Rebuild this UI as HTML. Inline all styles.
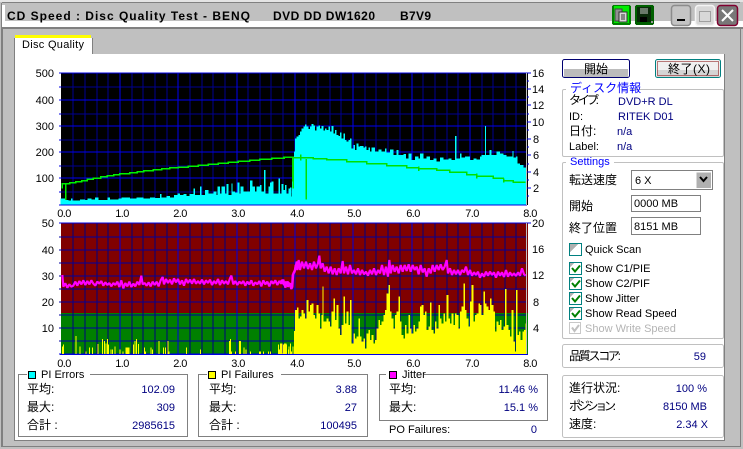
<!DOCTYPE html>
<html><head><meta charset="utf-8"><title>CD Speed</title>
<style>
html,body{margin:0;padding:0;background:#c0c0c0;width:743px;height:449px;overflow:hidden}
svg{display:block;position:absolute;left:0;top:0}
text{font-family:"Liberation Sans","Noto Sans CJK JP",sans-serif;font-size:11px;fill:#000}
.j{font-size:12px}
.n{fill:#000080}
.b{fill:#0000ff}
.e{text-anchor:end}
.m{text-anchor:middle;letter-spacing:-.6px}
.g{fill:#b4b4b4}
.c{shape-rendering:crispEdges}
</style></head><body>
<svg width="743" height="449" viewBox="0 0 743 449">
<!-- window frame -->
<g class="c">
<rect width="743" height="449" fill="#c0c0c0"/>
<rect x="0" y="0" width="743" height="2" fill="#e4e4e4"/>
<rect x="2" y="2" width="738" height="1" fill="#808080"/>
<rect x="1" y="3" width="1" height="444" fill="#808080"/>
<rect x="2" y="5" width="3" height="17" fill="#fff"/>
<rect x="2" y="21" width="741" height="6" fill="#fff"/>
<rect x="2" y="27" width="741" height="2" fill="#808080"/>
<rect x="2" y="29" width="1" height="418" fill="#808080"/>
<rect x="2" y="446" width="739" height="1" fill="#808080"/>
<rect x="740" y="29" width="1" height="418" fill="#808080"/>
<!-- page -->
<rect x="15" y="54" width="709" height="386" fill="#fff"/>
<rect x="14" y="54" width="1" height="387" fill="#808080"/>
<rect x="14" y="440" width="711" height="1" fill="#808080"/>
<rect x="724" y="54" width="1" height="387" fill="#808080"/>
<!-- tab -->
<rect x="15" y="38" width="77" height="17" fill="#fff"/>
<rect x="15" y="35" width="76" height="3" fill="#ffff00"/>
<rect x="14" y="38" width="1" height="17" fill="#808080"/>
<rect x="92" y="38" width="1" height="16" fill="#808080"/>
</g>
<text x="22" y="48" textLength="62">Disc Quality</text>
<!-- title -->
<g style="font-weight:bold">
<text x="7" y="20" textLength="243" style="font-size:12px;font-weight:bold">CD Speed : Disc Quality Test - BENQ</text>
<text x="273" y="20" textLength="102" style="font-size:12px;font-weight:bold">DVD DD DW1620</text>
<text x="400" y="20" textLength="31" style="font-size:12px;font-weight:bold">B7V9</text>
</g>
<!-- title icons -->
<g class="c">
<rect x="612" y="5" width="19" height="20" rx="2" fill="#008000"/>
<rect x="614" y="6" width="15" height="17" fill="#00ee00"/>
<rect x="615" y="9" width="7" height="12" fill="#909090" stroke="#444"/>
<rect x="619" y="12" width="8" height="10" fill="#d8d8d8" stroke="#333"/>
<path d="M621 15h4M621 17h4M621 19h4" stroke="#333"/>
<rect x="635" y="5" width="19" height="20" rx="2" fill="#006000"/>
<rect x="637" y="7" width="14" height="15" fill="#0a2a0a"/>
<rect x="640" y="8" width="8" height="6" fill="#6a7a6a"/>
<rect x="640" y="17" width="7" height="5" fill="#000"/>
<rect x="651" y="21" width="2" height="2" fill="#999"/>
</g>
<rect x="671.500" y="5.500" width="19" height="20" rx="3" fill="#c4c4c4" stroke="#8c8c8c" stroke-width="1.500"/>
<rect x="677" y="19" width="8" height="2" fill="#000" class="c"/>
<rect x="695.500" y="5.500" width="19" height="20" rx="3" fill="#d8d8d8" stroke="#f4f4f4" stroke-width="1.500"/>
<rect x="699.500" y="11.500" width="11" height="10" fill="none" stroke="#a0a0a0"/>
<rect x="717.500" y="5.500" width="20" height="20" rx="3" fill="#787878" stroke="#800030" stroke-width="1.500"/>
<path d="M722 10L733 21M733 10L722 21" stroke="#fff" stroke-width="2"/>

<!-- chart 1 -->
<g class="c">
<rect x="61" y="73" width="467" height="132" fill="#000"/>
<path d="M73 73V205M85 73V205M97 73V205M108 73V205M132 73V205M143 73V205M155 73V205M167 73V205M190 73V205M202 73V205M213 73V205M225 73V205M248 73V205M260 73V205M271 73V205M283 73V205M306 73V205M318 73V205M330 73V205M341 73V205M365 73V205M376 73V205M388 73V205M400 73V205M423 73V205M435 73V205M447 73V205M458 73V205M482 73V205M493 73V205M505 73V205M516 73V205M61 87H527M61 114H527M61 140H527M61 166H527M61 192H527" stroke="#000090" fill="none"/>
<path d="M120 73V205M178 73V205M237 73V205M295 73V205M353 73V205M412 73V205M470 73V205M59 100H527M59 126H527M59 152H527M59 178H527" stroke="#0000f0" fill="none"/>
<path d="M59 73H527M59 87H61M59 114H61M59 140H61M59 166H61M59 192H61M59 205H527" stroke="#0000e0" fill="none"/>
<path d="M527 73H531M527 81H529M527 89H531M527 97H529M527 105H531M527 114H529M527 122H531M527 130H529M527 139H531M527 147H529M527 155H531M527 164H529M527 172H531M527 180H529M527 188H531M527 196H529" stroke="#0000e0" fill="none"/>
<g transform="translate(30 60) scale(.33333)">
<path fill="#00ffff" d="M92 434V415H105V420H115V422H123V415H128V421H140V422H150V418H165V420H172V415H185V418H195V412H205V420H232V412H240V418H265V416H275V412H300V415H320V413H340V416H360V412H375V414H390V402H395V412H410V408H420V412H432V405H442V400H450V405H460V402H470V408H478V402H490V386H495V405H510V380H515V405H525V390H535V400H550V395H560V405H562V380H570V400H575V380H585V400H590V372H596V405H605V370H608V395H615V398H622V368H628V400H632V380H640V395H660V362H668V380H675V395H680V380H690V375H695V395H702V330H706V400H715V380H720V368H725V365H730V400H745V355H750V400H755V390H765V378H770V405H780V382H785V410H787V335H792V275H797V235H802V245H807V228H810V434Z"/>
</g>
<g transform="translate(280 60) scale(.33333)">
<path fill="#00ffff" d="M0 434V405H5V372H10V405H15V375H20V400H25V385H32V410H36V333H45V235H50V230H55V225H60V215H65V205H70V200H75V193H80V200H85V207H90V200H95V192H100V197H105V212H110V200H115V197H120V205H125V198H130V212H135V205H140V210H145V200H150V215H155V198H160V220H165V210H170V225H175V228H180V218H185V235H190V220H195V240H200V245H205V240H210V235H215V265H220V255H225V270H230V250H235V260H240V258H250V262H255V260H260V270H265V262H270V275H275V262H285V275H295V268H305V275H315V265H320V278H330V268H340V285H350V270H355V285H370V282H378V295H385V280H395V300H405V290H415V295H420V280H430V295H440V290H450V300H460V295H470V305H480V293H490V298H505V295H515V300H525V228H529V295H540V280H545V292H555V290H570V300H580V295H590V298H600V290H605V285H615V198H618V285H628V270H635V285H650V275H660V280H670V285H680V290H697V273H700V292H708V290H712V310H720V315H730V322H738V325H740V434Z"/>
</g>
<rect x="526" y="73" width="1" height="132" fill="#c0c0c0"/>
</g>
<g class="c" transform="translate(30 60) scale(.33333)" fill="none" stroke="#00f000" stroke-width="4.500">
<path d="M97 385V372H108V420M108 372H120V369H138V366H155V362H172V358H190V355H212V351H232V348H252V345H270V342H300V339H322V336H342V333H370V330H395V327H420V324H445V322H475V319H505V316H535V313H565V310H595V307H625V304H660V301H690V298H725V295H762V292H792M790 292V385"/>
</g>
<g class="c" transform="translate(280 60) scale(.33333)" fill="none" stroke="#00e000" stroke-width="4.500">
<path d="M0 295H13V292H40M39 292V365M40 293H62M62 283V302M62 294H100V297H140V300H200V306H260V312H320V318H380V323H417M417 320V333M417 326H470V331H510V337H560V344H590M591 340V355M591 349H640V355H672M672 356V368M672 362H700V367H736M79 297V418"/>
</g>
<g class="e">
<text x="54" y="77">500</text><text x="54" y="104">400</text><text x="54" y="130">300</text><text x="54" y="156">200</text><text x="54" y="182">100</text>
</g>
<text x="532" y="77">16</text><text x="532" y="93">14</text><text x="532" y="109">12</text><text x="532" y="126">10</text>
<text x="533" y="143">8</text><text x="533" y="159">6</text><text x="533" y="176">4</text><text x="533" y="192">2</text>
<g class="m">
<text x="64" y="217">0.0</text><text x="122" y="217">1.0</text><text x="180" y="217">2.0</text><text x="238" y="217">3.0</text><text x="297" y="217">4.0</text><text x="354" y="217">5.0</text><text x="413" y="217">6.0</text><text x="472" y="217">7.0</text><text x="530" y="217">8.0</text>
</g>

<!-- chart 2 -->
<g class="c">
<rect x="61" y="223" width="467" height="90" fill="#800000"/>
<rect x="61" y="313" width="467" height="42" fill="#008000"/>
<path d="M73 223V354M85 223V354M97 223V354M108 223V354M132 223V354M143 223V354M155 223V354M167 223V354M190 223V354M202 223V354M213 223V354M225 223V354M248 223V354M260 223V354M271 223V354M283 223V354M306 223V354M318 223V354M330 223V354M341 223V354M365 223V354M376 223V354M388 223V354M400 223V354M423 223V354M435 223V354M447 223V354M458 223V354M482 223V354M493 223V354M505 223V354M516 223V354" stroke="#000080" fill="none"/>
<path d="M59 237H527M59 250H527M59 263H527M59 276H527M59 289H527M59 302H527M59 315H527M59 328H527M59 341H527" stroke="#0000a0" fill="none"/>
<path d="M120 223V354M178 223V354M237 223V354M295 223V354M353 223V354M412 223V354M470 223V354" stroke="#0000e0" fill="none"/>
<path d="M59 223H531M59 354H527" stroke="#0000e0" fill="none"/>
<g transform="translate(30 215) scale(.33333)">
<path fill="none" stroke="#ffff00" stroke-width="3" d="M97 418V395M100 418V388M138 418V363M150 418V395M168 418V410M178 418V397M187 418V397M204 418V387M217 418V372M224 418V378M228 418V385M232 418V372M235 418V388M243 418V403M248 418V403M255 418V395M270 418V403M279 418V410M288 418V397M291 418V397M294 418V397M297 418V397M310 418V388M315 418V378M319 418V372M325 418V387M343 418V397M347 418V410M363 418V397M368 418V403M387 418V378M400 418V397M406 418V397M414 418V378M417 418V410M469 418V397M511 418V403M598 418V378M601 418V372M605 418V410M616 418V410M628 418V378M632 418V378M642 418V397M648 418V403M662 418V410M688 418V410M692 418V410M700 418V410M716 418V410M722 418V410M745 418V388M748 418V403M760 418V388M765 418V410M770 418V388M775 418V403M785 418V410"/>
<path fill="#ffff00" d="M792 418V348H796V285H801V277H806V310H810V418Z"/>
</g>
<g transform="translate(280 215) scale(.33333)">
<path fill="#ffff00" d="M0 418V385H8V415H12V385H20V418H25V395H28V418H30V385H33V418H38V395H41V418ZM42 418V348H45V285H50V300H55V320H60V305H65V285H70V295H75V310H80V255H85V290H90V270H95V265H100V300H105V310H110V270H115V295H120V340H125V300H128V215H130V320H140V310H145V320H150V335H155V290H160V250H165V315H170V270H175V340H180V360H185V330H190V245H195V325H200V290H205V330H210V255H215V385H220V355H225V370H230V365H235V310H240V365H245V380H250V370H255V400H260V355H265V345H270V375H275V360H280V385H285V375H290V340H295V315H300V330H305V320H310V300H315V285H320V235H325V210H330V290H335V310H340V340H345V300H350V290H355V245H360V320H365V360H370V370H375V330H380V355H385V300H390V340H395V355H400V330H405V350H410V340H415V320H420V275H425V270H430V300H435V290H440V345H445V335H450V262H455V345H460V355H465V320H470V340H475V270H480V310H485V325H490V295H495V320H500V240H505V310H510V325H515V295H520V330H525V295H530V300H535V340H540V290H545V275H550V205H555V285H560V310H565V335H570V260H575V210H580V320H585V300H590V295H595V265H600V270H605V300H610V230H615V265H620V275H625V285H630V250H635V270H640V290H645V350H650V320H655V330H660V315H665V345H670V335H675V222H680V330H685V345H690V365H695V285H700V380H705V410H708V225H712V360H717V350H722V375H727V350H732V345H737V325H741V418Z"/>
</g>
<rect x="526" y="223" width="1" height="132" fill="#c0c0c0"/>
<rect x="60" y="354" width="468" height="1" fill="#0000e0"/>
</g>
<g transform="translate(30 215) scale(.33333)" fill="none" stroke="#ff00ff" stroke-width="6.500" stroke-linejoin="bevel">
<path d="M97 180L100 215 106 205 112 218 118 208 124 215 130 212 136 200 142 212 148 198 154 208 160 196 166 210 172 198 178 208 184 196 190 206 196 212 202 200 208 206 214 198 220 212 226 202 232 210 238 204 244 214 250 204 256 210 262 200 268 216 274 196 280 220 286 204 292 214 298 200 304 216 310 206 316 214 322 200 328 210 334 182 338 208 344 204 350 212 356 202 362 214 368 200 374 210 380 200 386 214 392 196 398 186 402 208 408 192 414 204 420 194 426 208 432 190 438 202 444 192 450 208 456 196 462 212 468 192 474 204 480 194 486 206 492 192 498 206 504 198 510 206 516 194 522 208 528 196 534 204 540 194 546 210 552 198 558 206 564 192 570 210 576 196 582 206 588 198 594 208 600 190 604 182 610 208 616 198 622 210 628 200 634 206 640 198 646 212 652 200 658 208 664 196 670 212 676 202 682 208 688 198 694 214 700 196 706 208 712 200 718 214 724 198 730 206 736 196 742 210 748 198 754 206 760 194 766 218 772 200 778 206 784 222 787 215 790 175 795 165 800 140 806 150"/>
</g>
<g transform="translate(280 215) scale(.33333)" fill="none" stroke="#ff00ff" stroke-width="6.500" stroke-linejoin="bevel">
<path d="M0 205L6 195 12 210 18 200 24 215 30 205 36 220 38 180 44 170 47 150 52 165 56 135 60 165 66 140 72 160 78 140 84 162 90 145 96 165 102 140 108 160 114 145 118 122 122 160 128 145 134 170 140 155 146 175 152 155 158 178 164 160 170 180 176 160 182 175 188 138 192 175 198 155 204 178 210 150 216 175 222 165 228 178 234 160 240 180 246 165 252 178 258 170 264 182 270 165 276 178 282 160 288 180 294 165 300 175 306 150 312 180 318 155 324 185 328 135 332 175 338 150 344 170 350 155 356 175 362 150 368 170 374 150 380 168 386 148 392 170 398 150 404 165 410 155 416 178 422 150 428 172 434 160 440 185 446 160 452 175 458 150 464 170 470 150 476 165 482 148 488 165 494 155 500 135 504 175 510 160 516 180 522 165 528 178 534 165 540 180 546 165 552 172 558 155 564 180 570 165 576 182 582 172 588 180 594 170 600 188 606 175 612 185 618 170 624 182 630 170 636 180 642 172 648 188 654 170 660 182 666 172 672 186 678 165 684 185 690 172 696 182 702 175 708 183 714 172 720 182 726 160 732 178 737 182"/>
</g>
<g class="e">
<text x="54" y="227">50</text><text x="54" y="254">40</text><text x="54" y="280">30</text><text x="54" y="306">20</text><text x="54" y="332">10</text>
</g>
<text x="532" y="227">20</text><text x="532" y="253">16</text><text x="532" y="279">12</text><text x="533" y="306">8</text><text x="533" y="332">4</text>
<g class="m">
<text x="64" y="367">0.0</text><text x="122" y="367">1.0</text><text x="180" y="367">2.0</text><text x="238" y="367">3.0</text><text x="297" y="367">4.0</text><text x="354" y="367">5.0</text><text x="413" y="367">6.0</text><text x="472" y="367">7.0</text><text x="530" y="367">8.0</text>
</g>

<!-- stat boxes -->
<g class="c" fill="none" stroke="#808080">
<path d="M27 374.500H18.500V436.500H187.500V374.500H90"/>
<path d="M207 374.500H198.500V436.500H367.500V374.500H281"/>
<path d="M386 374.500H379.500V420.500H547.500V374.500H424"/>
</g>
<g class="c" stroke="#000">
<rect x="28.500" y="371.500" width="7" height="7" fill="#00ffff"/>
<rect x="208.500" y="371.500" width="7" height="7" fill="#ffff00"/>
<rect x="389.500" y="371.500" width="7" height="7" fill="#ff00ff"/>
</g>
<text x="41" y="378">PI Errors</text>
<text x="221" y="378">PI Failures</text>
<text x="402" y="378">Jitter</text>
<text class="j" x="27" y="393">平均:</text><text class="j" x="27" y="411">最大:</text><text class="j" x="27" y="429">合計 :</text>
<text class="n e" x="175" y="393">102.09</text><text class="n e" x="175" y="411">309</text><text class="n e" x="175" y="429">2985615</text>
<text class="j" x="209" y="393">平均:</text><text class="j" x="209" y="411">最大:</text><text class="j" x="209" y="429">合計 :</text>
<text class="n e" x="357" y="393">3.88</text><text class="n e" x="357" y="411">27</text><text class="n e" x="357" y="429">100495</text>
<text class="j" x="389" y="393">平均:</text><text class="j" x="389" y="411">最大:</text>
<text class="n e" x="538" y="393">11.46 %</text><text class="n e" x="538" y="411">15.1 %</text>
<text x="389" y="433">PO Failures:</text><text class="n e" x="537" y="433">0</text>

<!-- buttons -->
<rect x="562.500" y="59.500" width="67" height="18" rx="2" fill="#fff" stroke="#000070"/>
<rect x="564" y="69" width="64" height="8" fill="#bcbcbc" class="c"/>
<text class="j" x="584" y="73">開始</text>
<rect x="655.500" y="59.500" width="65" height="18" rx="2" fill="#f0f0f0" stroke="#008080"/>
<rect x="657" y="70" width="62" height="7" fill="#d4d4d4" class="c"/>
<rect x="657.500" y="61.500" width="61" height="14" fill="none" stroke="#800000" stroke-dasharray="1 1" class="c"/>
<text class="j" x="668" y="73" textLength="42">終了(X)</text>

<!-- right group boxes -->
<g fill="none" stroke="#c0c0c0">
<path d="M566 89.500H564Q562.500 89.500 562.500 91V155Q562.500 156.500 564 156.500H722Q723.500 156.500 723.500 155V91Q723.500 89.500 722 89.500H630"/>
<path d="M566 162.500H564Q562.500 162.500 562.500 164V337Q562.500 338.500 564 338.500H722Q723.500 338.500 723.500 337V164Q723.500 162.500 722 162.500H614"/>
<rect x="562.500" y="344.500" width="161" height="23" rx="2"/>
<rect x="562.500" y="375.500" width="161" height="62" rx="2"/>
</g>
<text class="j b" x="570" y="92">ディスク情報</text>
<text class="j" x="569" y="104" textLength="30">タイプ:</text><text class="n" x="618" y="105">DVD+R DL</text>
<text x="569" y="120">ID:</text><text class="n" x="618" y="120">RITEK D01</text>
<text class="j" x="569" y="135">日付:</text><text class="n" x="617" y="135">n/a</text>
<text x="569" y="150">Label:</text><text class="n" x="617" y="150">n/a</text>
<text class="b" x="570" y="165">Settings</text>
<text class="j" x="569" y="184">転送速度</text>
<text class="j" x="569" y="210">開始</text>
<text class="j" x="569" y="232">終了位置</text>
<g class="c">
<rect x="631.500" y="170.500" width="81" height="19" fill="#fff" stroke="#808080"/>
<rect x="696" y="172" width="15" height="16" fill="#b0b0b0"/>
<path d="M696 172H711M696 172V188" stroke="#fff" fill="none"/>
<rect x="631.500" y="195.500" width="69" height="16" fill="#fff" stroke="#808080"/>
<rect x="631.500" y="217.500" width="69" height="17" fill="#fff" stroke="#808080"/>
</g>
<path d="M700 177L703.500 181L707 177" fill="none" stroke="#000" stroke-width="2"/>
<text x="635" y="184">6 X</text>
<text x="634" y="207">0000 MB</text>
<text x="634" y="230">8151 MB</text>
<!-- checkboxes -->
<g class="c">
<rect x="569.500" y="243.500" width="12" height="12" fill="#fff" stroke="#008080"/>
<path d="M570 244H578L570 252Z" fill="#b0b0b0"/>
<rect x="569.500" y="262.500" width="12" height="12" fill="#fff" stroke="#008080"/>
<rect x="569.500" y="277.500" width="12" height="12" fill="#fff" stroke="#008080"/>
<rect x="569.500" y="292.500" width="12" height="12" fill="#fff" stroke="#008080"/>
<rect x="569.500" y="307.500" width="12" height="12" fill="#fff" stroke="#008080"/>
<rect x="569.500" y="322.500" width="11" height="11" fill="#fff" stroke="#c8c8c8"/>
<path d="M570 263H574L570 267ZM570 278H574L570 282ZM570 293H574L570 297ZM570 308H574L570 312Z" fill="#b0b0b0"/>
</g>
<g fill="none" stroke="#008000" stroke-width="2">
<path d="M572 268L575 271.500L580 265.500M572 283L575 286.500L580 280.500M572 298L575 301.500L580 295.500M572 313L575 316.500L580 310.500"/>
</g>
<path d="M572 327.500L574.500 331L579 325" fill="none" stroke="#c0c0c0" stroke-width="2"/>
<text x="585" y="253">Quick Scan</text>
<text x="585" y="272">Show C1/PIE</text>
<text x="585" y="287">Show C2/PIF</text>
<text x="585" y="302">Show Jitter</text>
<text x="585" y="317">Show Read Speed</text>
<text class="g" x="585" y="332">Show Write Speed</text>
<text class="j" x="569" y="360" textLength="52">品質スコア:</text>
<text class="n e" x="706" y="360">59</text>
<text class="j" x="569" y="392">進行状況:</text><text class="n e" x="707" y="392">100 %</text>
<text class="j" x="569" y="410" textLength="47">ポジション:</text><text class="n e" x="707" y="410">8150 MB</text>
<text class="j" x="569" y="428">速度:</text><text class="n e" x="708" y="428">2.34 X</text>
</svg>
</body></html>
